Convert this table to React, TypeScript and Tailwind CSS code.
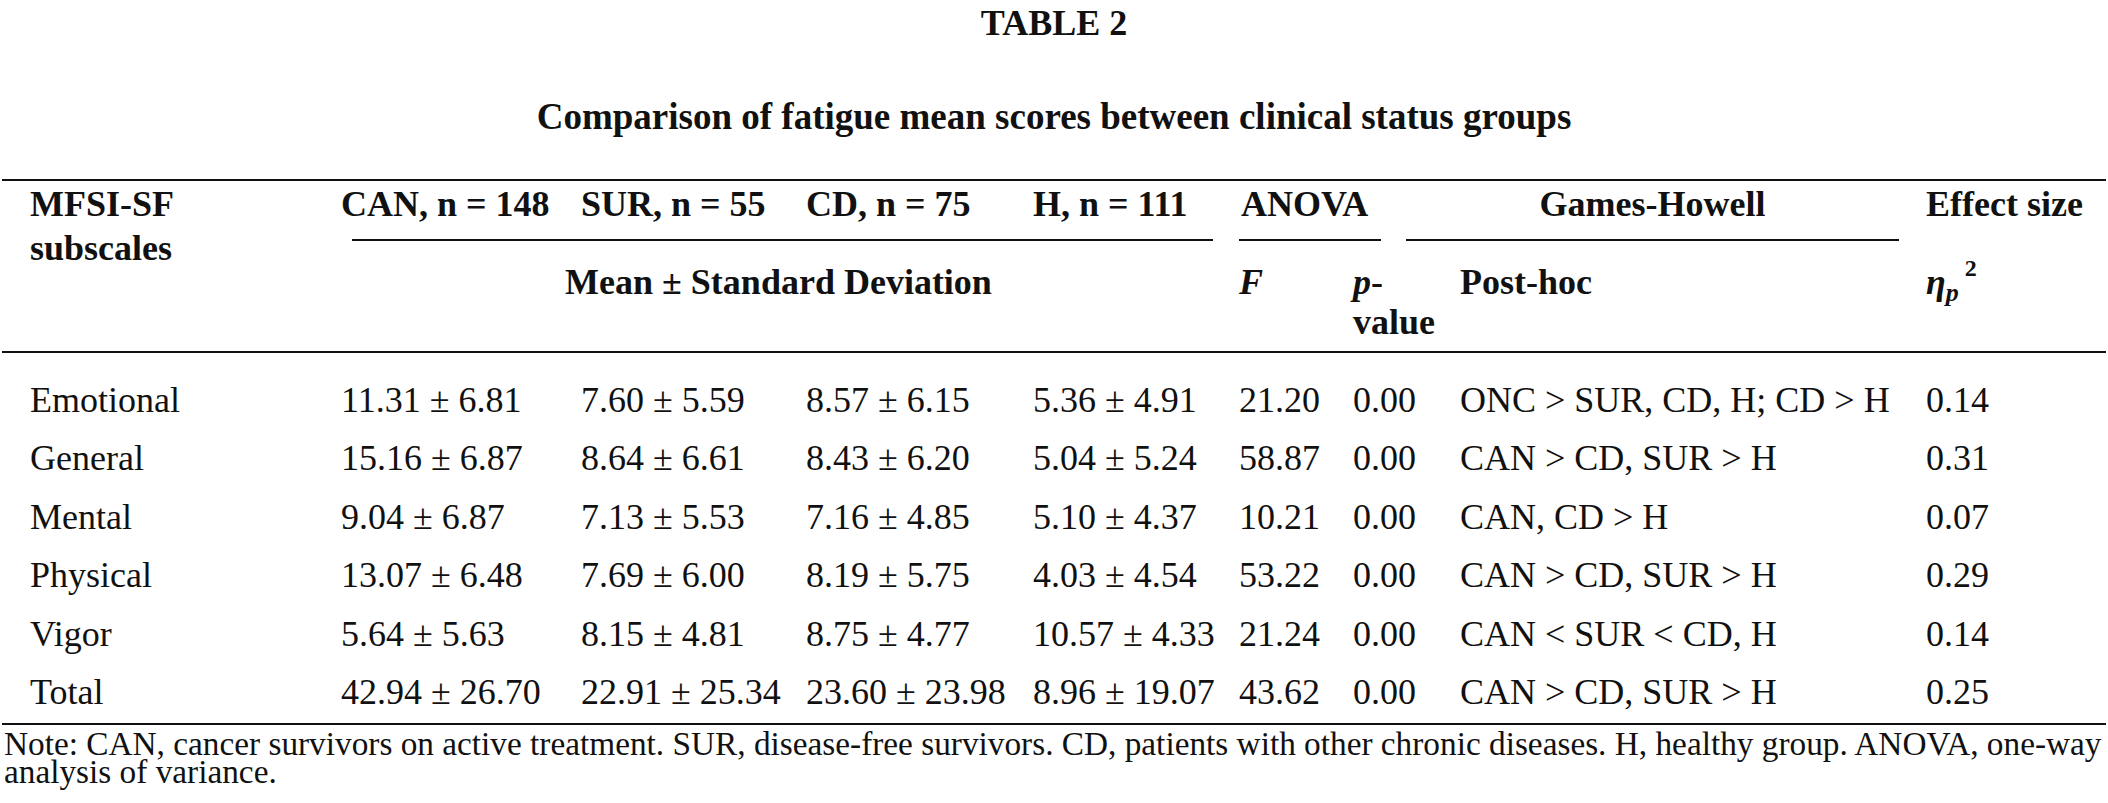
import React from 'react';

const grid = 'grid grid-cols-[339px_240px_225px_227px_206px_114px_107px_466px_1fr]';

const rows = [
  ['Emotional', '11.31 ± 6.81', '7.60 ± 5.59', '8.57 ± 6.15', '5.36 ± 4.91', '21.20', '0.00', 'ONC > SUR, CD, H; CD > H', '0.14'],
  ['General', '15.16 ± 6.87', '8.64 ± 6.61', '8.43 ± 6.20', '5.04 ± 5.24', '58.87', '0.00', 'CAN > CD, SUR > H', '0.31'],
  ['Mental', '9.04 ± 6.87', '7.13 ± 5.53', '7.16 ± 4.85', '5.10 ± 4.37', '10.21', '0.00', 'CAN, CD > H', '0.07'],
  ['Physical', '13.07 ± 6.48', '7.69 ± 6.00', '8.19 ± 5.75', '4.03 ± 4.54', '53.22', '0.00', 'CAN > CD, SUR > H', '0.29'],
  ['Vigor', '5.64 ± 5.63', '8.15 ± 4.81', '8.75 ± 4.77', '10.57 ± 4.33', '21.24', '0.00', 'CAN < SUR < CD, H', '0.14'],
  ['Total', '42.94 ± 26.70', '22.91 ± 25.34', '23.60 ± 23.98', '8.96 ± 19.07', '43.62', '0.00', 'CAN > CD, SUR > H', '0.25'],
];

export default function App() {
  return (
    <div className="w-[2108px] h-[803px] bg-white text-[#111] font-['Liberation_Serif','Times_New_Roman',serif] overflow-hidden">
      {/* caption */}
      <div className="pt-[7px] text-center font-bold text-[36px] leading-[32px]">TABLE 2</div>
      <div className="mt-[58px] text-center font-bold text-[37px] leading-[40px]">
        Comparison of fatigue mean scores between clinical status groups
      </div>

      <div className="mt-[42px] mx-[2px] border-t-2 border-[#111]">
        {/* header */}
        <div className={`${grid} pt-[5px] pb-[9px] border-b-2 border-[#111] text-[36px] font-bold`}>
          <div className="row-start-1 row-span-3 col-start-1 -mt-[4px] pl-[28px] leading-[44px]">
            MFSI-SF
            <br />
            subscales
          </div>
          <div className="row-start-1 col-start-2 leading-[37px] whitespace-nowrap">CAN, n = 148</div>
          <div className="row-start-1 col-start-3 leading-[37px] whitespace-nowrap">SUR, n = 55</div>
          <div className="row-start-1 col-start-4 leading-[37px] whitespace-nowrap">CD, n = 75</div>
          <div className="row-start-1 col-start-5 leading-[37px] whitespace-nowrap">H, n = 111</div>
          <div className="row-start-1 col-start-6 col-span-2 leading-[37px] pl-[2px]">ANOVA</div>
          <div className="row-start-1 col-start-7 col-span-2 ml-[53px] mr-[27px] text-center leading-[37px]">
            Games-Howell
          </div>
          <div className="row-start-1 col-start-9 leading-[37px] whitespace-nowrap">Effect size</div>

          <div className="row-start-2 col-start-2 col-span-4 ml-[11px] mr-[26px] mt-[16px] h-[2px] bg-[#111]" />
          <div className="row-start-2 col-start-6 col-span-2 mr-[79px] mt-[16px] h-[2px] bg-[#111]" />
          <div className="row-start-2 col-start-7 col-span-2 ml-[53px] mr-[27px] mt-[16px] h-[2px] bg-[#111]" />

          <div className="row-start-3 col-start-2 col-span-4 ml-[11px] mr-[26px] mt-[21px] text-center leading-[40px] pr-[8px] whitespace-nowrap">
            Mean ± Standard Deviation
          </div>
          <div className="row-start-3 col-start-6 mt-[21px] leading-[40px] italic">F</div>
          <div className="row-start-3 col-start-7 mt-[21px] leading-[40px]">
            <span className="italic">p</span>-
            <br />
            value
          </div>
          <div className="row-start-3 col-start-8 mt-[21px] leading-[40px]">Post-hoc</div>
          <div className="row-start-3 col-start-9 mt-[21px] leading-[40px]">
            <span className="italic">η</span>
            <sub className="italic text-[26px]">p</sub>
            <sup className="text-[24px] ml-[6px] -top-[0.75em]">2</sup>
          </div>
        </div>

        {/* body */}
        <div className="pt-[18px] pb-[2px] border-b-2 border-[#111] text-[36px]">
          {rows.map((r) => (
            <div key={r[0]} className={`${grid} h-[58.4px] leading-[58.4px] whitespace-nowrap`}>
              <div className="pl-[28px]">{r[0]}</div>
              {r.slice(1).map((c, i) => (
                <div key={i}>{c}</div>
              ))}
            </div>
          ))}
        </div>

        {/* note */}
        <p className="pt-[5px] pl-[2px] text-[33.3px] leading-[28px] whitespace-nowrap">
          Note: CAN, cancer survivors on active treatment. SUR, disease-free survivors. CD, patients with other chronic
          diseases. H, healthy group. ANOVA, one-way
          <br />
          analysis of variance.
        </p>
      </div>
    </div>
  );
}
